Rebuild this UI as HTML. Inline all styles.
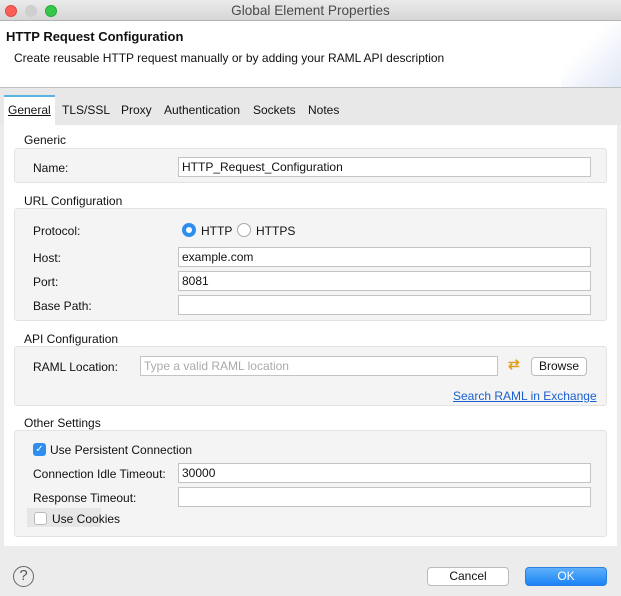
<!DOCTYPE html><html><head><style>
*{box-sizing:border-box;margin:0;padding:0}
body{width:621px;height:596px;background:#ececec;font-family:"Liberation Sans",sans-serif;font-size:12px;color:#111;position:relative;overflow:hidden}
.a{position:absolute}
.title{left:0;top:0;width:621px;height:21px;background:linear-gradient(#ebebeb,#d6d6d6);border-bottom:1px solid #b4b4b4;text-align:center;font-size:13.6px;line-height:21px;color:#4a4a4a}
.dot{width:12px;height:12px;border-radius:50%;top:5px}
.hdr{left:0;top:21px;width:621px;height:67px;background:#fff;border-bottom:1px solid #bfbfbf}
.tabs{left:0;top:88px;width:621px;height:37px;background:#e8e8e8}
.content{left:4px;top:125px;width:613px;height:421px;background:#fff}
.box{background:#f4f4f4;border:1px solid #e3e3e3;border-radius:3px;left:14px;width:593px}
.inp{background:#fff;border:1px solid #c4c4c4;height:20px;line-height:18px;padding-left:3px;font-size:12px}
.btn{background:#fff;border:1px solid #bbb;border-radius:4px;text-align:center;font-size:12px;line-height:17px}
</style></head><body>
<div class="a title">Global Element Properties</div>
<div class="a dot" style="left:5px;background:#fc5f57;border:1px solid #de4a43"></div>
<div class="a dot" style="left:25px;background:#cfcfcf"></div>
<div class="a dot" style="left:45px;background:#34c84a;border:1px solid #27aa35"></div>
<div class="a hdr"><div class="a" style="right:0;top:0;width:60px;height:66px;background:linear-gradient(135deg,#fff 40%,#eef2fa 70%,#e2e8f5)"></div></div>
<div class="a" style="left:6px;top:29px;font-size:13px;font-weight:bold">HTTP Request Configuration</div>
<div class="a" style="left:14px;top:51px">Create reusable HTTP request manually or by adding your RAML API description</div>
<div class="a tabs"></div>
<div class="a" style="left:4px;top:95px;width:51px;height:30px;background:#fff;border-top:2px solid #5bb4e0"></div>
<div class="a" style="left:8px;top:103px;text-decoration:underline">General</div>
<div class="a" style="left:62px;top:103px">TLS/SSL</div>
<div class="a" style="left:121px;top:103px">Proxy</div>
<div class="a" style="left:164px;top:103px">Authentication</div>
<div class="a" style="left:253px;top:103px">Sockets</div>
<div class="a" style="left:308px;top:103px">Notes</div>
<div class="a content"></div>

<div class="a" style="left:24px;top:133px">Generic</div>
<div class="a box" style="top:148px;height:35px"></div>
<div class="a" style="left:33px;top:161px">Name:</div>
<div class="a inp" style="left:178px;top:157px;width:413px">HTTP_Request_Configuration</div>

<div class="a" style="left:24px;top:194px">URL Configuration</div>
<div class="a box" style="top:208px;height:113px"></div>
<div class="a" style="left:33px;top:224px">Protocol:</div>
<div class="a" style="left:182px;top:223px;width:14px;height:14px;border-radius:50%;background:#2d8ef0"><div class="a" style="left:4px;top:4px;width:6px;height:6px;border-radius:50%;background:#fff"></div></div>
<div class="a" style="left:201px;top:224px">HTTP</div>
<div class="a" style="left:237px;top:223px;width:14px;height:14px;border-radius:50%;background:#fff;border:1px solid #aaa"></div>
<div class="a" style="left:256px;top:224px">HTTPS</div>
<div class="a" style="left:33px;top:251px">Host:</div>
<div class="a inp" style="left:178px;top:247px;width:413px">example.com</div>
<div class="a" style="left:33px;top:275px">Port:</div>
<div class="a inp" style="left:178px;top:271px;width:413px">8081</div>
<div class="a" style="left:33px;top:299px">Base Path:</div>
<div class="a inp" style="left:178px;top:295px;width:413px"></div>

<div class="a" style="left:24px;top:332px">API Configuration</div>
<div class="a box" style="top:346px;height:60px"></div>
<div class="a" style="left:33px;top:360px">RAML Location:</div>
<div class="a inp" style="left:140px;top:356px;width:358px;color:#aaa">Type a valid RAML location</div>
<div class="a" style="left:508px;top:356px;font-size:14px;color:#e0a020;font-weight:bold">⇄</div>
<div class="a btn" style="left:531px;top:357px;width:56px;height:19px">Browse</div>
<div class="a" style="left:453px;top:389px;color:#1a5fd0;text-decoration:underline">Search RAML in Exchange</div>

<div class="a" style="left:24px;top:416px">Other Settings</div>
<div class="a box" style="top:430px;height:107px"></div>
<div class="a" style="left:33px;top:443px;width:13px;height:13px;border-radius:3px;background:#2d8ef0;color:#fff;font-size:10px;line-height:13px;text-align:center">✓</div>
<div class="a" style="left:50px;top:443px">Use Persistent Connection</div>
<div class="a" style="left:33px;top:467px">Connection Idle Timeout:</div>
<div class="a inp" style="left:178px;top:463px;width:413px">30000</div>
<div class="a" style="left:33px;top:491px">Response Timeout:</div>
<div class="a inp" style="left:178px;top:487px;width:413px"></div>
<div class="a" style="left:27px;top:508px;width:74px;height:19px;background:#e6e6e6"></div>
<div class="a" style="left:34px;top:512px;width:13px;height:13px;border-radius:3px;background:#fff;border:1px solid #bbb"></div>
<div class="a" style="left:52px;top:512px">Use Cookies</div>

<div class="a" style="left:13px;top:566px;width:21px;height:21px;border-radius:50%;border:1.5px solid #666;text-align:center;font-size:15px;line-height:18px;color:#555">?</div>
<div class="a btn" style="left:427px;top:567px;width:82px;height:19px">Cancel</div>
<div class="a btn" style="left:525px;top:567px;width:82px;height:19px;background:linear-gradient(#5fb0fb,#1b83f5);border-color:#2a7fe0;color:#fff">OK</div>
</body></html>
